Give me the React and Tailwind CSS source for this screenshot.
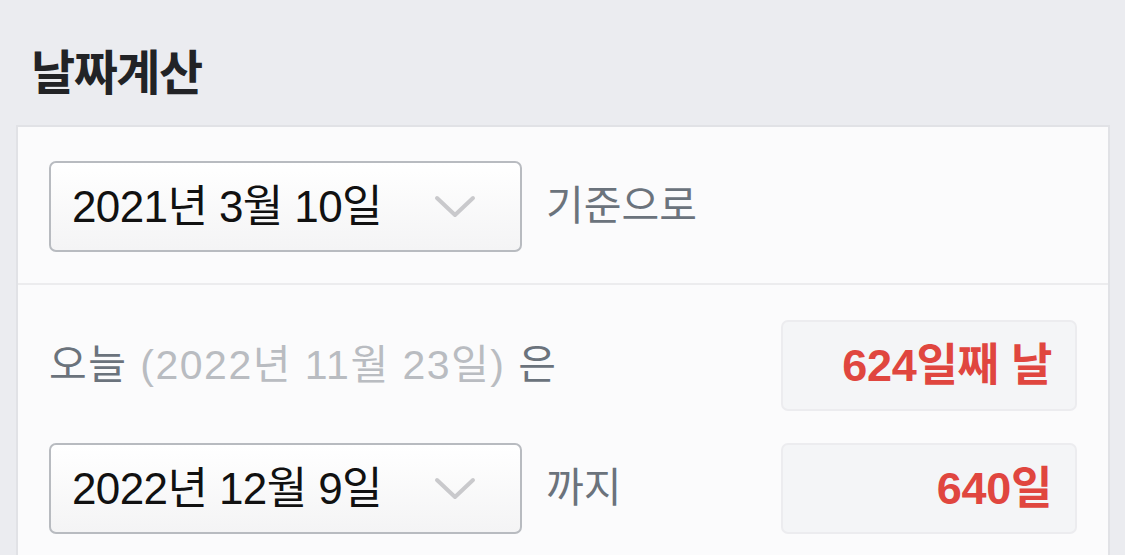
import React from "react";

const font = { fontFamily: '"Liberation Sans", "Noto Sans CJK KR", sans-serif' };

function Chevron() {
  return (
    <svg width="42" height="26" viewBox="0 0 42 26" className="shrink-0">
      <path d="M3 4 L21 21 L39 4" fill="none" stroke="#c9c9cc" strokeWidth="4" strokeLinecap="round" strokeLinejoin="round" />
    </svg>
  );
}

function Select({ children }) {
  return (
    <div className="w-[473px] h-[91px] shrink-0 rounded-[7px] border-2 border-[#b8bbc0] bg-gradient-to-b from-[#ffffff] to-[#f4f4f5] flex items-center justify-between pl-[21px] pr-[44px]">
      <span className="text-[44px] text-[#111] tracking-[-0.6px] leading-none">{children}</span>
      <Chevron />
    </div>
  );
}

function Result({ children }) {
  return (
    <div className="w-[296px] h-[91px] shrink-0 rounded-[7px] border-2 border-[#ececef] bg-[#f4f5f7] flex items-center justify-end pr-[23px]">
      <span className="text-[45px] font-bold text-[#e0463f] leading-none tracking-[-0.3px]">{children}</span>
    </div>
  );
}

export default function App() {
  return (
    <div className="w-[1125px] h-[555px] overflow-hidden bg-[#ebecf0]" style={font}>
      <div className="pt-[45px] pl-[31px] h-[125px]">
        <h1 className="text-[48px] font-bold text-[#222326] leading-[58px] tracking-[-1.5px]">날짜계산</h1>
      </div>
      <div className="ml-[16px] w-[1094px] border-2 border-[#e1e2e6] bg-[#fbfbfc] pb-[40px]">
        <div className="flex items-center px-[31px] pt-[34px] pb-[31px] border-b-2 border-[#ececee]">
          <Select>2021년 3월 10일</Select>
          <span className="ml-[24px] text-[41px] text-[#6b737c] leading-none">기준으로</span>
        </div>
        <div className="px-[31px] pt-[35px] flex flex-col gap-[32px]">
          <div className="flex items-center justify-between">
            <div className="text-[41px] text-[#6b737c] leading-none tracking-[1.5px]">
              오늘 <span className="text-[#b9bcc1]">(2022년 11월 23일)</span> 은
            </div>
            <Result>624일째 날</Result>
          </div>
          <div className="flex items-center">
            <Select>2022년 12월 9일</Select>
            <span className="ml-[24px] text-[41px] text-[#6b737c] leading-none">까지</span>
            <div className="ml-auto">
              <Result>640일</Result>
            </div>
          </div>
        </div>
      </div>
    </div>
  );
}
